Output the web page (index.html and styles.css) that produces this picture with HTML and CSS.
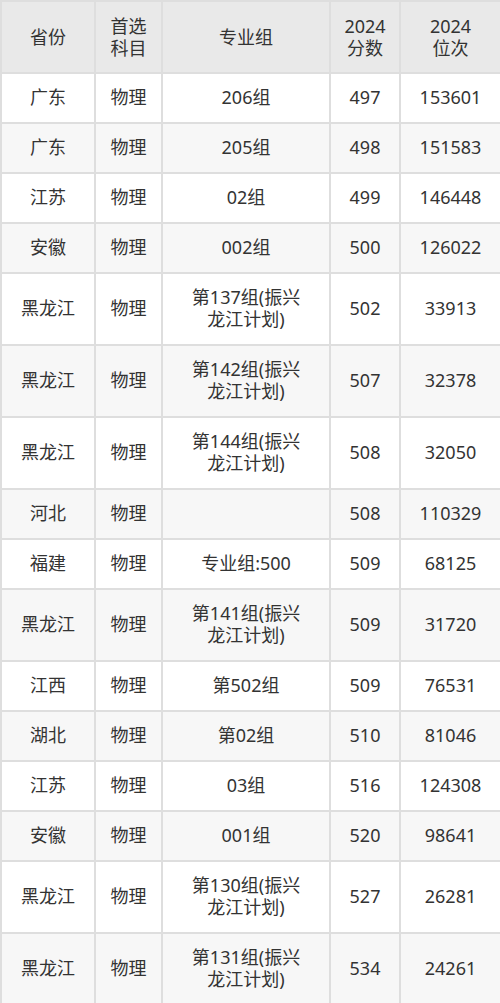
FILE: index.html
```html
<!DOCTYPE html>
<html lang="zh">
<head>
<meta charset="utf-8">
<link rel="stylesheet" href="styles.css">
</head>
<body>
<table class="score-table">
<colgroup>
<col class="c1"><col class="c2"><col class="c3"><col class="c4"><col class="c5">
</colgroup>
<thead>
<tr><th>省份</th><th>首选<br>科目</th><th>专业组</th><th>2024<br>分数</th><th>2024<br>位次</th></tr>
</thead>
<tbody>
<tr><td>广东</td><td>物理</td><td>206组</td><td>497</td><td>153601</td></tr>
<tr><td>广东</td><td>物理</td><td>205组</td><td>498</td><td>151583</td></tr>
<tr><td>江苏</td><td>物理</td><td>02组</td><td>499</td><td>146448</td></tr>
<tr><td>安徽</td><td>物理</td><td>002组</td><td>500</td><td>126022</td></tr>
<tr class="tall"><td>黑龙江</td><td>物理</td><td>第137组(振兴<br>龙江计划)</td><td>502</td><td>33913</td></tr>
<tr class="tall"><td>黑龙江</td><td>物理</td><td>第142组(振兴<br>龙江计划)</td><td>507</td><td>32378</td></tr>
<tr class="tall"><td>黑龙江</td><td>物理</td><td>第144组(振兴<br>龙江计划)</td><td>508</td><td>32050</td></tr>
<tr><td>河北</td><td>物理</td><td></td><td>508</td><td>110329</td></tr>
<tr><td>福建</td><td>物理</td><td>专业组:500</td><td>509</td><td>68125</td></tr>
<tr class="tall"><td>黑龙江</td><td>物理</td><td>第141组(振兴<br>龙江计划)</td><td>509</td><td>31720</td></tr>
<tr><td>江西</td><td>物理</td><td>第502组</td><td>509</td><td>76531</td></tr>
<tr><td>湖北</td><td>物理</td><td>第02组</td><td>510</td><td>81046</td></tr>
<tr><td>江苏</td><td>物理</td><td>03组</td><td>516</td><td>124308</td></tr>
<tr><td>安徽</td><td>物理</td><td>001组</td><td>520</td><td>98641</td></tr>
<tr class="tall"><td>黑龙江</td><td>物理</td><td>第130组(振兴<br>龙江计划)</td><td>527</td><td>26281</td></tr>
<tr class="tall"><td>黑龙江</td><td>物理</td><td>第131组(振兴<br>龙江计划)</td><td>534</td><td>24261</td></tr>
</tbody>
</table>
</body>
</html>
```
FILE: styles.css
```css
html, body {
  margin: 0;
  padding: 0;
  background: #ffffff;
}
.score-table {
  width: 500px;
  border-collapse: collapse;
  table-layout: fixed;
  font-family: "Noto Sans", "Noto Sans CJK SC", sans-serif;
  font-size: 18px;
  line-height: 22px;
  color: #333333;
  border: 2px solid #dedede;
}
.c1 { width: 94px; }
.c2 { width: 67px; }
.c3 { width: 168px; }
.c4 { width: 70px; }
.c5 { width: 101px; }
.score-table th,
.score-table td {
  border: 2px solid #dedede;
  text-align: center;
  vertical-align: middle;
  padding: 0 1px 3px;
  height: 45px;
  font-weight: normal;
}
.score-table thead th {
  background: #e9e9e9;
  height: 69px;
  padding-bottom: 1px;
}
.score-table tbody tr:nth-child(even) td {
  background: #f7f7f7;
}
.score-table tr.tall td {
  height: 67px;
}
```
